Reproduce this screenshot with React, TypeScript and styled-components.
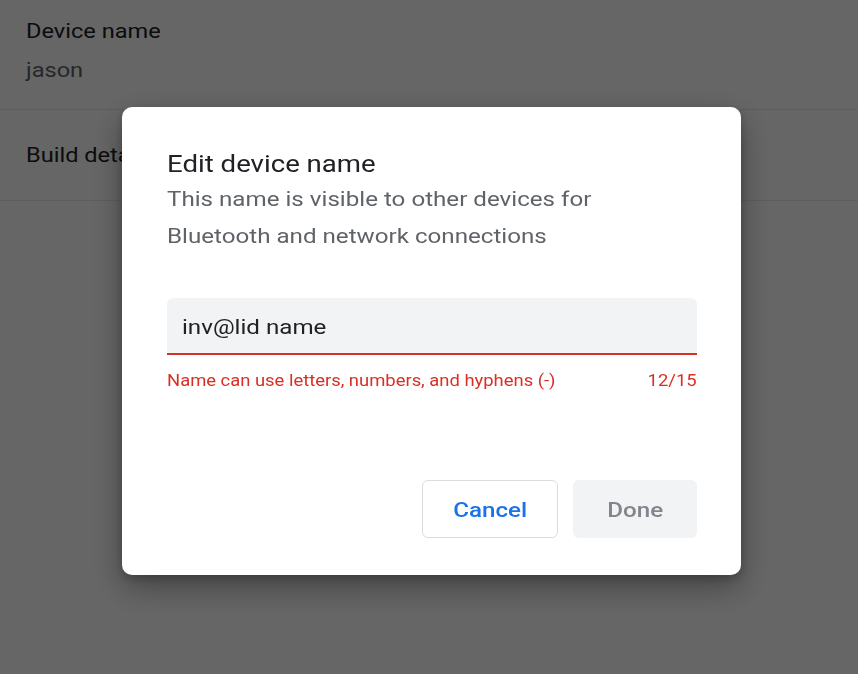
import React from "react";
import styled, { createGlobalStyle, css } from "styled-components";

const Global = createGlobalStyle`
  html, body { margin: 0; padding: 0; }
  body {
    width: 858px;
    height: 674px;
    overflow: hidden;
    background: #ffffff;
    font-family: Roboto, "Liberation Sans", Arial, sans-serif;
    -webkit-font-smoothing: antialiased;
  }
  * { box-sizing: border-box; }
`;

/* the reference text is drawn slightly wide; widen glyphs horizontally */
const wide = (origin: string = "left") => css`
  transform: scaleX(1.15);
  transform-origin: ${origin} center;
`;

const Page = styled.div`
  width: 858px;
  height: 674px;
  background: #ffffff;
  display: flex;
  flex-direction: column;
  overflow: hidden;
`;

const SettingRow = styled.div<{ $h: number; $top?: boolean }>`
  height: ${(p) => p.$h}px;
  padding: ${(p) => (p.$top ? "17px 26px 0" : "0 26px")};
  display: flex;
  flex-direction: column;
  align-items: flex-start;
  justify-content: ${(p) => (p.$top ? "flex-start" : "center")};
  gap: 11px;
  border-bottom: 1px solid #e8eaed;
`;

const RowLabel = styled.div`
  font-size: 20.5px;
  color: #202124;
  line-height: 28px;
  ${wide()}
`;

const RowSub = styled.div`
  font-size: 20.5px;
  color: #5f6368;
  line-height: 28px;
  ${wide()}
`;

const Scrim = styled.div`
  position: fixed;
  inset: 0;
  background: rgba(0, 0, 0, 0.6);
  display: flex;
  align-items: flex-start;
  justify-content: flex-start;
  padding: 107px 0 0 122px;
`;

const Dialog = styled.div`
  width: 619px;
  height: 468px;
  background: #ffffff;
  border-radius: 10px;
  box-shadow: 0 12px 32px rgba(0, 0, 0, 0.35), 0 4px 10px rgba(0, 0, 0, 0.2);
  padding: 41px 44px 37px 45px;
  display: flex;
  flex-direction: column;
  align-items: stretch;
`;

const Title = styled.h2`
  margin: 0;
  align-self: flex-start;
  font-size: 24px;
  font-weight: 400;
  line-height: 32px;
  color: #202124;
  ${wide()}
`;

const Description = styled.p`
  margin: 1px 0 0;
  align-self: flex-start;
  font-size: 21px;
  line-height: 37px;
  color: #5f6368;
  width: 385px;
  ${wide()}
`;

const Field = styled.div`
  margin-top: 43px;
  display: flex;
  flex-direction: column;
`;

const InputBox = styled.div<{ $invalid?: boolean }>`
  height: 57px;
  background: #f1f3f4;
  border-radius: 6px 6px 0 0;
  border-bottom: 2px solid ${(p) => (p.$invalid ? "#d93025" : "#1a73e8")};
  display: flex;
  align-items: center;
  padding: 2px 15px 0;
`;

const InputText = styled.span`
  display: inline-block;
  font-size: 21px;
  color: #202124;
  line-height: 28px;
  ${wide()}
`;

const HelpRow = styled.div`
  margin-top: 15px;
  display: flex;
  justify-content: space-between;
  font-size: 16px;
  line-height: 22px;
  color: #d93025;
`;

const HelpText = styled.span<{ $end?: boolean }>`
  display: inline-block;
  ${(p) => wide(p.$end ? "right" : "left")}
`;

const Actions = styled.div`
  margin-top: auto;
  display: flex;
  justify-content: flex-end;
  gap: 15px;
`;

const Button = styled.button<{ $variant: "outline" | "disabled" }>`
  height: 58px;
  border-radius: 6px;
  font-family: Roboto, "Liberation Sans", Arial, sans-serif;
  font-size: 21px;
  font-weight: 500;
  cursor: pointer;
  padding: 2px 0 0;
  width: ${(p) => (p.$variant === "outline" ? 136 : 124)}px;
  background: ${(p) => (p.$variant === "outline" ? "#ffffff" : "#f1f3f4")};
  border: ${(p) => (p.$variant === "outline" ? "1px solid #dadce0" : "none")};
  color: ${(p) => (p.$variant === "outline" ? "#1a73e8" : "#80868b")};
`;

const ButtonLabel = styled.span`
  display: inline-block;
  ${wide("center")}
`;

export default function App() {
  return (
    <>
      <Global />
      <Page>
        <SettingRow $h={110} $top>
          <RowLabel>Device name</RowLabel>
          <RowSub>jason</RowSub>
        </SettingRow>
        <SettingRow $h={91}>
          <RowLabel>Build details</RowLabel>
        </SettingRow>
      </Page>
      <Scrim>
        <Dialog role="dialog">
          <Title>Edit device name</Title>
          <Description>
            This name is visible to other devices for Bluetooth and network connections
          </Description>
          <Field>
            <InputBox $invalid>
              <InputText>inv@lid name</InputText>
            </InputBox>
            <HelpRow>
              <HelpText>Name can use letters, numbers, and hyphens (-)</HelpText>
              <HelpText $end>12/15</HelpText>
            </HelpRow>
          </Field>
          <Actions>
            <Button $variant="outline">
              <ButtonLabel>Cancel</ButtonLabel>
            </Button>
            <Button $variant="disabled" disabled>
              <ButtonLabel>Done</ButtonLabel>
            </Button>
          </Actions>
        </Dialog>
      </Scrim>
    </>
  );
}
